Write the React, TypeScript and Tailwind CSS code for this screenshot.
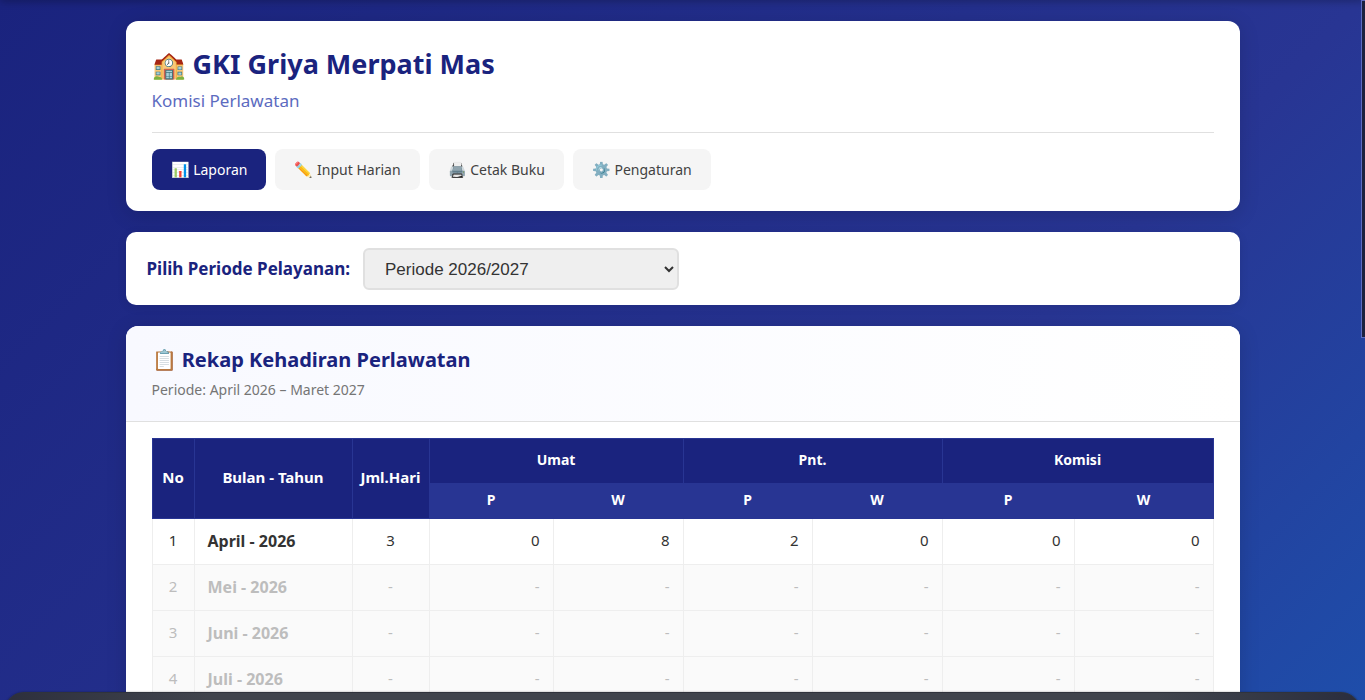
import clsx from "clsx"

const menus = [
  { icon: "📊", label: "Laporan", active: true },
  { icon: "✏️", label: "Input Harian", active: false },
  { icon: "🖨️", label: "Cetak Buku", active: false },
  { icon: "⚙️", label: "Pengaturan", active: false },
]

const groups = ["Umat", "Pnt.", "Komisi"]

const rows = [
  { month: "April - 2026", days: 3, counts: [0, 8, 2, 0, 0, 0] },
  { month: "Mei - 2026", days: null, counts: null },
  { month: "Juni - 2026", days: null, counts: null },
  { month: "Juli - 2026", days: null, counts: null },
]

export default function App() {
  return (
    <div className="relative h-screen overflow-hidden bg-[linear-gradient(135deg,#1a237e_0%,#283593_50%,#1565c0_100%)] bg-[length:100%_1365px] bg-no-repeat font-['Noto_Sans',sans-serif] text-[#333]">
      <main className="mx-auto flex max-w-[1166px] flex-col gap-[21px] px-[26px] py-[21px]">
        <Header />
        <PeriodPicker />
        <Report />
      </main>

      <div className="absolute inset-x-0 -top-1 h-1 shadow-[0_0_8px_rgba(0,0,0,0.5)]" />
      <div className="absolute -right-1 top-0 h-[338px] w-2 border border-[#5c6bc0] bg-[#1b2140]" />
      <div className="absolute inset-x-1 top-[692px] h-10 rounded-[20px] border border-[#30333c] bg-[linear-gradient(to_right,#2d2f3d,#40444c_15%,#40444c_85%,#2a2d3d)] shadow-[0_0_2px_rgba(0,0,0,0.4)]" />
    </div>
  )
}

function Header() {
  return (
    <header className="rounded-xl bg-white px-[26px] pt-[23px] pb-[21px] shadow-[0_4px_20px_rgba(0,0,0,0.15)]">
      <h1 className="text-[27px] leading-10 font-bold text-[#1a237e]">
        🏫 GKI Griya Merpati Mas
      </h1>
      <p className="mt-[5px] text-[17px] leading-6 text-[#5c6bc0]">Komisi Perlawatan</p>

      <nav className="mt-[19px] flex flex-wrap gap-[9px] border-t border-[#e0e0e0] pt-4">
        {menus.map((m) => (
          <button
            key={m.label}
            type="button"
            className={clsx(
              "h-[41px] rounded-lg px-[19px] text-sm",
              m.active ? "bg-[#1a237e] text-white" : "bg-[#f5f5f5] text-[#424242]",
            )}
          >
            <span className="text-[15px] leading-5">{m.icon}</span> {m.label}
          </button>
        ))}
      </nav>
    </header>
  )
}

function PeriodPicker() {
  return (
    <section className="flex items-center gap-[13px] rounded-[10px] bg-white px-[21px] pt-4 pb-[15px] shadow-[0_2px_10px_rgba(0,0,0,0.1)]">
      <label htmlFor="period" className="text-[17px] leading-6 font-bold text-[#1a237e]">
        Pilih Periode Pelayanan:
      </label>
      <select
        id="period"
        className="h-[42px] w-[316px] rounded-md border-2 border-[#e0e0e0] bg-[#efefef] px-4 font-['Liberation_Sans',sans-serif] text-[17px]"
      >
        <option>Periode 2026/2027</option>
      </select>
    </section>
  )
}

function Report() {
  return (
    <section className="overflow-hidden rounded-xl bg-white shadow-[0_4px_20px_rgba(0,0,0,0.15)]">
      <header className="border-b border-[#e0e0e0] bg-linear-to-r from-[#f8f9ff] to-white px-[26px] pt-5 pb-[21px]">
        <h2 className="text-xl leading-7 font-bold text-[#1a237e]">
          📋 Rekap Kehadiran Perlawatan
        </h2>
        <p className="mt-[5px] text-sm leading-[21px] text-[#757575]">
          Periode: April 2026 – Maret 2027
        </p>
      </header>

      <div className="px-[26px] pt-4 pb-[26px]">
        <table className="w-full table-fixed border-collapse text-[15px]">
          <colgroup>
            <col className="w-[42px]" />
            <col className="w-[158px]" />
            <col className="w-[77px]" />
            <col className="w-[124px]" />
            <col className="w-[130px]" />
            <col className="w-[129px]" />
            <col className="w-[130px]" />
            <col className="w-[132px]" />
            <col className="w-[139px]" />
          </colgroup>
          <thead className="bg-[#1a237e] text-white">
            <tr className="h-[45px]">
              <th rowSpan={2} className="border border-[#283593] pb-0.5">No</th>
              <th rowSpan={2} className="border border-[#283593] pb-0.5">Bulan - Tahun</th>
              <th rowSpan={2} className="border border-[#283593] pb-0.5">Jml.Hari</th>
              {groups.map((g) => (
                <th key={g} colSpan={2} className="border border-[#283593] pb-0.5 text-sm">
                  {g}
                </th>
              ))}
            </tr>
            <tr className="h-[35px] bg-[#283593] text-sm">
              {groups.flatMap((g) => [
                <th key={g + "P"} className="border border-[#283593] pb-0.5">P</th>,
                <th key={g + "W"} className="border border-[#283593] pb-0.5">W</th>,
              ])}
            </tr>
          </thead>
          <tbody>
            {rows.map((r, i) => (
              <tr
                key={r.month}
                className={clsx("h-[46px]", !r.counts && "bg-[#fafafa] text-[#bdbdbd]")}
              >
                <td className="border border-[#eee] pb-0.5 text-center">{i + 1}</td>
                <td className="border border-[#eee] px-[13px] pb-0.5 text-base font-bold">
                  {r.month}
                </td>
                <td className="border border-[#eee] pb-0.5 text-center">{r.days ?? "-"}</td>
                {groups.flatMap((g, n) =>
                  [0, 1].map((k) => (
                    <td key={g + k} className="border border-[#eee] px-[13px] pb-0.5 text-right">
                      {r.counts ? r.counts[n * 2 + k] : "-"}
                    </td>
                  )),
                )}
              </tr>
            ))}
          </tbody>
        </table>
      </div>
    </section>
  )
}
